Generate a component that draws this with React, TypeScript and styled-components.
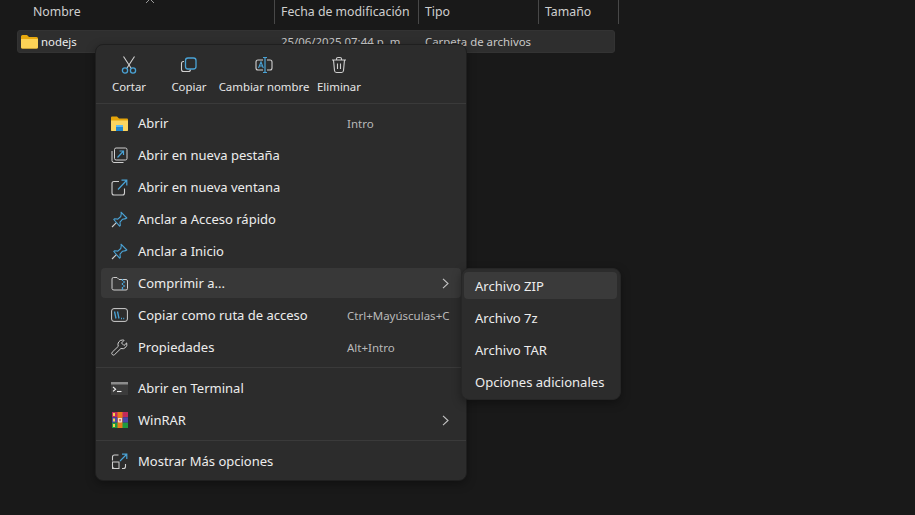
import styled, { createGlobalStyle } from 'styled-components';
import type { ReactElement } from 'react';

const GlobalStyle = createGlobalStyle`
  html, body {
    margin: 0;
    width: 915px;
    height: 515px;
    overflow: hidden;
    background: #191919;
    font-family: 'Noto Sans', 'Open Sans', 'Liberation Sans', sans-serif;
    font-size: 13px;
  }
`;

const BLUE = '#4aa3d6';
const GREY = '#cfcfcf';

const Page = styled.div`
  position: relative;
  width: 915px;
  height: 515px;
  background: #191919;
  color: #e6e6e6;
  overflow: hidden;
`;

const Header = styled.div`
  display: grid;
  grid-template-columns: 275px 144px 120px 80px;
  height: 24px;
`;

const HeaderCell = styled.div`
  position: relative;
  display: flex;
  align-items: center;
  height: 24px;
  padding-left: 6px;
  padding-bottom: 1px;
  box-sizing: border-box;
  border-right: 1px solid #484848;
  font-size: 12.3px;
  color: #cfcfcf;
  white-space: nowrap;

  &:first-child {
    padding-left: 33px;
  }
`;

const SortCaret = styled.svg`
  position: absolute;
  left: 145px;
  top: -2px;
`;

const FileRow = styled.div`
  display: grid;
  grid-template-columns: 258px 144px 1fr;
  align-items: center;
  width: 598px;
  height: 23px;
  margin: 6px 0 0 17px;
  box-sizing: border-box;
  background: #2e2e2e;
  border: 1px solid #333;
  border-radius: 3px;
  font-size: 11.4px;
  color: #c8c8c8;
`;

const FileName = styled.div`
  display: flex;
  align-items: center;
  gap: 3px;
  padding-left: 3px;
  color: #ececec;
`;

const FileCell = styled.div`
  padding-left: 5px;
  white-space: nowrap;
`;

const Menu = styled.div`
  position: absolute;
  left: 95px;
  top: 44px;
  width: 372px;
  height: 437px;
  box-sizing: border-box;
  background: #2c2c2c;
  border: 1px solid #1f1f1f;
  border-radius: 8px;
  padding: 0 5px;
  box-shadow: 0 3px 10px rgba(0, 0, 0, 0.35);
`;

const Toolbar = styled.div`
  display: grid;
  grid-template-columns: 56px 64px 86px 64px;
  height: 58px;
  margin: 0 -5px;
  padding: 0 5px;
  border-bottom: 1px solid #3a3a3a;
`;

const ToolButton = styled.div`
  display: flex;
  flex-direction: column;
  align-items: center;
  padding-top: 10px;
  gap: 4px;
  font-size: 11.4px;
  line-height: 16px;
  color: #e6e6e6;
  white-space: nowrap;

  & > svg {
    flex: none;
  }
`;

const Rows = styled.div<{ $first?: boolean }>`
  display: flex;
  flex-direction: column;
  gap: 2px;
  padding-top: ${p => (p.$first ? '4px' : '0')};
`;

const Row = styled.div<{ $active?: boolean }>`
  display: grid;
  grid-template-columns: 37px 209px 1fr;
  align-items: center;
  height: 30px;
  border-radius: 4px;
  background: ${p => (p.$active ? '#383838' : 'transparent')};
  font-size: 13px;
  color: #ededed;
  white-space: nowrap;
`;

const RowIcon = styled.div`
  display: flex;
  align-items: center;
  justify-content: center;
  width: 37px;
`;

const Shortcut = styled.span`
  grid-column: 3;
  grid-row: 1;
  font-size: 11.5px;
  color: #b9b9b9;
`;

const Chevron = styled.svg`
  grid-column: 3;
  grid-row: 1;
  justify-self: end;
  margin-right: 12px;
`;

const Separator = styled.div`
  height: 1px;
  margin: 5px -5px;
  background: #3a3a3a;
`;

const Submenu = styled.div`
  position: absolute;
  left: 461px;
  top: 268px;
  width: 160px;
  height: 132px;
  box-sizing: border-box;
  display: flex;
  flex-direction: column;
  gap: 5px;
  padding: 3px 3px 3px 2px;
  background: #2c2c2c;
  border: 1px solid #262626;
  border-radius: 8px;
  box-shadow: 0 3px 10px rgba(0, 0, 0, 0.35);
`;

const SubItem = styled.div<{ $active?: boolean }>`
  display: flex;
  align-items: center;
  height: 27px;
  padding-left: 11px;
  border-radius: 4px;
  background: ${p => (p.$active ? '#3a3a3a' : 'transparent')};
  font-size: 13.05px;
  color: #ededed;
  white-space: nowrap;
`;

function FolderIcon() {
  return (
    <svg width="17" height="15" viewBox="0 0 17 15">
      <path d="M0 2.5Q0 1 1.5 1H6l2 2h7.5Q17 3 17 4.5V13q0 1.5-1.5 1.5h-14Q0 14.5 0 13Z" fill="#e8a90e" />
      <path d="M0 5h17v8q0 1.5-1.5 1.5h-14Q0 14.5 0 13Z" fill="#fbd257" />
    </svg>
  );
}

function CutIcon() {
  return (
    <svg width="18" height="20" viewBox="0 0 18 20" fill="none" strokeWidth="1.1">
      <path d="M3.5 1.5 11 13M14.5 1.5 7 13" stroke={GREY} />
      <circle cx="5" cy="15.5" r="2.6" stroke={BLUE} strokeWidth="1.3" />
      <circle cx="13" cy="15.5" r="2.6" stroke={BLUE} strokeWidth="1.3" />
    </svg>
  );
}

function CopyIcon() {
  return (
    <svg width="18" height="20" viewBox="0 0 18 20" fill="none">
      <path d="M4 6.5H3.5Q1.5 6.5 1.5 8.5v6q0 2 2 2h5q2 0 2-2" stroke={GREY} strokeWidth="1.1" />
      <rect x="5.5" y="3" width="10.5" height="11" rx="2.5" stroke={BLUE} strokeWidth="1.3" />
    </svg>
  );
}

function RenameIcon() {
  return (
    <svg width="18" height="20" viewBox="0 0 18 20" fill="none">
      <path d="M8 5H3Q1 5 1 7v6q0 2 2 2h5M12 5h3q2 0 2 2v6q0 2-2 2h-3" stroke={GREY} strokeWidth="1.1" />
      <path d="M10 2.5v15M8 2.5h4M8 17.5h4" stroke={BLUE} strokeWidth="1.2" />
      <path d="M3.5 13 6 7l2.3 6M4.4 11h3" stroke={BLUE} strokeWidth="1.1" />
    </svg>
  );
}

function TrashIcon() {
  return (
    <svg width="18" height="20" viewBox="0 0 18 20" fill="none" stroke={GREY} strokeWidth="1.1">
      <path d="M2 5h14M6.5 5V3.8Q6.5 2.5 8 2.5h2q1.5 0 1.5 1.3V5" />
      <path d="M3.5 5l1 10.5q.2 2 2 2h5q1.8 0 2-2l1-10.5" />
      <path d="M7.5 8.5v5.5M10.5 8.5v5.5" />
    </svg>
  );
}

function ExplorerIcon() {
  return (
    <svg width="17" height="15" viewBox="0 0 17 15">
      <path d="M0 1.5Q0 .5 1 .5h5l2 2h8q1 0 1 1V14q0 1-1 1H1q-1 0-1-1Z" fill="#e5a50a" />
      <path d="M0 4.5h17V14q0 1-1 1H1q-1 0-1-1Z" fill="#fbd560" />
      <rect x="5" y="9" width="7" height="6" rx=".6" fill="#1f86cf" />
      <rect x="5" y="9" width="7" height="2" fill="#5cb8ef" />
    </svg>
  );
}

function NewTabIcon() {
  return (
    <svg width="17" height="17" viewBox="0 0 17 17" fill="none">
      <path d="M1 4v9.5q0 2 2 2h9.5" stroke={GREY} strokeWidth="1" />
      <rect x="3.5" y="1" width="12.5" height="12" rx="1.6" stroke={GREY} strokeWidth="1" />
      <path d="M6.5 10.5 12.5 4M8.5 4h4v4" stroke={BLUE} strokeWidth="1.2" />
    </svg>
  );
}

function NewWindowIcon() {
  return (
    <svg width="17" height="17" viewBox="0 0 17 17" fill="none">
      <path d="M8 2.5H3q-2 0-2 2V14q0 2 2 2h8.5q2 0 2-2V9.5" stroke={GREY} strokeWidth="1.1" />
      <path d="M7 10.5 15.5 1.5M10.5 1.2h5.3v5.3" stroke={BLUE} strokeWidth="1.2" />
    </svg>
  );
}

function PinIcon() {
  return (
    <svg width="17" height="17" viewBox="0 0 17 17" fill="none">
      <path d="M1 16l4.4-4.4" stroke={GREY} strokeWidth="1.1" />
      <path d="M10 1.2 15.8 7l-1 .6-3.2.6-2.6 3 .3 3.3-.7.6L2.8 8.5l.7-.7 3.3.3 3-2.6.5-3.2Z" stroke={BLUE} strokeWidth="1.1" strokeLinejoin="round" />
    </svg>
  );
}

function CompressIcon() {
  return (
    <svg width="17" height="15" viewBox="0 0 17 15" fill="none">
      <path d="M1 3q0-1.5 1.5-1.5h3.5l2 2h7q1.5 0 1.5 1.5v7.5q0 1.5-1.5 1.5h-12Q1 14 1 12.5Z" stroke={GREY} strokeWidth="1" />
      <path d="M11.5 3v2M13 5v2M11.5 7v2M13 9v2M11.5 11v3" stroke={BLUE} strokeWidth="1.3" />
    </svg>
  );
}

function CopyPathIcon() {
  return (
    <svg width="17" height="14" viewBox="0 0 17 14" fill="none">
      <rect x=".6" y=".6" width="15.8" height="12.8" rx="2.4" stroke={GREY} strokeWidth="1" />
      <path d="M3.5 3.5 5 10.5M6.5 3.5 8 10.5" stroke={BLUE} strokeWidth="1.3" />
      <path d="M10 10.5h1M12.2 10.5h1" stroke={BLUE} strokeWidth="1.3" />
    </svg>
  );
}

function WrenchIcon() {
  return (
    <svg width="17" height="17" viewBox="0 0 17 17" fill="none">
      <path
        d="M11.5 1a4.5 4.5 0 0 1 1.6.3L10.5 4l2.5 2.5 2.7-2.6a4.5 4.5 0 0 1-5.8 5.6L3.6 15.6a1.7 1.7 0 0 1-2.4-2.4L7.3 7.3A4.5 4.5 0 0 1 11.5 1Z"
        stroke={GREY}
        strokeWidth="1"
        strokeLinejoin="round"
      />
    </svg>
  );
}

function TerminalIcon() {
  return (
    <svg width="17" height="13" viewBox="0 0 17 13">
      <rect width="17" height="13" fill="#3b3b3b" />
      <rect width="17" height="2.5" fill="#8c8c8c" />
      <path d="M2 5l2.6 2.2L2 9.4" fill="none" stroke="#f0f0f0" strokeWidth="1.1" />
      <path d="M6 9.5h4.5" stroke="#f0f0f0" strokeWidth="1.1" />
    </svg>
  );
}

function WinrarIcon() {
  return (
    <svg width="16" height="16" viewBox="0 0 16 16">
      <rect y="0" width="16" height="5.3" fill="#c22a5c" />
      <rect y="5.3" width="16" height="5.4" fill="#4a47ad" />
      <rect y="10.7" width="16" height="5.3" fill="#1f9a3f" />
      <rect x="5.5" width="5" height="16" fill="#e87a1c" />
      <rect x="1" y="1" width="2" height="3" fill="#f3d24a" />
      <rect x="1" y="6.5" width="2" height="3" fill="#f3d24a" />
      <rect x="1" y="12" width="2" height="3" fill="#f3d24a" />
      <rect x="6.2" y="6" width="3.6" height="4.4" fill="#f4f4f4" />
      <rect x="7.4" y="6.8" width="1.2" height="2.6" fill="#b3261e" />
    </svg>
  );
}

function MoreIcon() {
  return (
    <svg width="17" height="17" viewBox="0 0 17 17" fill="none">
      <path d="M7.5 2H3.5q-2 0-2 2v3.5M1.5 11v2.5q0 2 2 2h2.5M11 15.5h1.5q2 0 2-2V11" stroke={GREY} strokeWidth="1.1" />
      <rect x="1.5" y="9" width="6.5" height="6.5" stroke={GREY} strokeWidth="1" />
      <path d="M9 8 15.5 1.5M11 1.2h4.8V6" stroke={BLUE} strokeWidth="1.2" />
    </svg>
  );
}

function RowChevron() {
  return (
    <Chevron width="7" height="11" viewBox="0 0 7 11" fill="none">
      <path d="M1 .8 6 5.5 1 10.2" stroke="#c4c4c4" strokeWidth="1.1" />
    </Chevron>
  );
}

const tools: { label: string; icon: ReactElement }[] = [
  { label: 'Cortar', icon: <CutIcon /> },
  { label: 'Copiar', icon: <CopyIcon /> },
  { label: 'Cambiar nombre', icon: <RenameIcon /> },
  { label: 'Eliminar', icon: <TrashIcon /> },
];

interface MenuEntry {
  label: string;
  icon: ReactElement;
  shortcut?: string;
  submenu?: boolean;
  active?: boolean;
}

const mainEntries: MenuEntry[] = [
  { label: 'Abrir', icon: <ExplorerIcon />, shortcut: 'Intro' },
  { label: 'Abrir en nueva pestaña', icon: <NewTabIcon /> },
  { label: 'Abrir en nueva ventana', icon: <NewWindowIcon /> },
  { label: 'Anclar a Acceso rápido', icon: <PinIcon /> },
  { label: 'Anclar a Inicio', icon: <PinIcon /> },
  { label: 'Comprimir a...', icon: <CompressIcon />, submenu: true, active: true },
  { label: 'Copiar como ruta de acceso', icon: <CopyPathIcon />, shortcut: 'Ctrl+Mayúsculas+C' },
  { label: 'Propiedades', icon: <WrenchIcon />, shortcut: 'Alt+Intro' },
];

const shellEntries: MenuEntry[] = [
  { label: 'Abrir en Terminal', icon: <TerminalIcon /> },
  { label: 'WinRAR', icon: <WinrarIcon />, submenu: true },
];

const moreEntries: MenuEntry[] = [{ label: 'Mostrar Más opciones', icon: <MoreIcon /> }];

const subItems = ['Archivo ZIP', 'Archivo 7z', 'Archivo TAR', 'Opciones adicionales'];

function MenuGroup({ entries, first }: { entries: MenuEntry[]; first?: boolean }) {
  return (
    <Rows $first={first}>
      {entries.map(entry => (
        <Row key={entry.label} $active={entry.active}>
          <RowIcon>{entry.icon}</RowIcon>
          <span>{entry.label}</span>
          {entry.shortcut && <Shortcut>{entry.shortcut}</Shortcut>}
          {entry.submenu && <RowChevron />}
        </Row>
      ))}
    </Rows>
  );
}

export default function App(): ReactElement {
  return (
    <Page>
      <GlobalStyle />
      <Header>
        <HeaderCell>
          Nombre
          <SortCaret width="10" height="6" viewBox="0 0 10 6" fill="none">
            <path d="M1 5 5 1l4 4" stroke="#9a9a9a" />
          </SortCaret>
        </HeaderCell>
        <HeaderCell>Fecha de modificación</HeaderCell>
        <HeaderCell>Tipo</HeaderCell>
        <HeaderCell>Tamaño</HeaderCell>
      </Header>
      <FileRow>
        <FileName>
          <FolderIcon />
          nodejs
        </FileName>
        <FileCell>25/06/2025 07:44 p. m.</FileCell>
        <FileCell>Carpeta de archivos</FileCell>
      </FileRow>
      <Menu>
        <Toolbar>
          {tools.map(tool => (
            <ToolButton key={tool.label}>
              {tool.icon}
              {tool.label}
            </ToolButton>
          ))}
        </Toolbar>
        <MenuGroup entries={mainEntries} first />
        <Separator />
        <MenuGroup entries={shellEntries} />
        <Separator />
        <MenuGroup entries={moreEntries} />
      </Menu>
      <Submenu>
        {subItems.map((item, i) => (
          <SubItem key={item} $active={i === 0}>
            {item}
          </SubItem>
        ))}
      </Submenu>
    </Page>
  );
}
